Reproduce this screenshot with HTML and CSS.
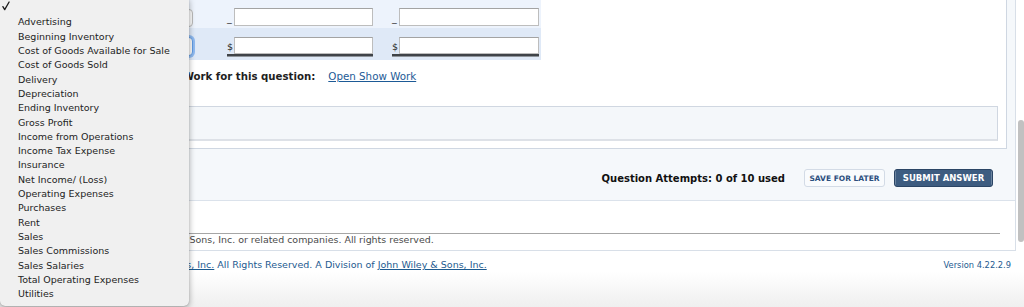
FILE: index.html
```html
<!DOCTYPE html>
<html lang="en">
<head>
<meta charset="UTF-8">
<title>Question Assistance</title>
<link rel="stylesheet" href="styles.css">
</head>
<body>
  <div class="page">
    <div class="question">
      <div class="sheet">
        <div class="row first">
          <div class="label"></div>
          <div class="pickcell"><div class="pick"></div></div>
          <div class="val wide"><span class="mark">_</span><input type="text" class="num"></div>
          <div class="val"><span class="mark">_</span><input type="text" class="num wider"></div>
        </div>
        <div class="row second">
          <div class="label"></div>
          <div class="pickcell"><div class="pick focused"></div></div>
          <div class="val wide"><span class="total"><span class="mark">$</span><input type="text" class="num"></span></div>
          <div class="val"><span class="total"><span class="mark">$</span><input type="text" class="num wider"></span></div>
        </div>
      </div>

      <div class="showwork">
        <b>Click if you would like to Show Work for this question:</b>
        <a href="#" class="worklink">Open Show Work</a>
      </div>

      <div class="workbox"></div>
    </div>

    <div class="attempts">
      <b>Question Attempts: 0 of 10 used</b>
      <button class="btn save">SAVE FOR LATER</button>
      <button class="btn submit">SUBMIT ANSWER</button>
    </div>

    <div class="legal">
      <p class="copy">© 2000-2019 John Wiley &amp; Sons, Inc. or related companies. All rights reserved.</p>
    </div>
  </div>

  <div class="footer">
    <span>© 2000-2019 <a href="#">John Wiley &amp; Sons, Inc.</a> All Rights Reserved. A Division of <a href="#">John Wiley &amp; Sons, Inc.</a></span>
    <span class="version">Version 4.22.2.9</span>
  </div>

  <!-- open dropdown of the account picker -->
  <ul class="menu">
    <li class="checked"><svg width="8" height="10" viewBox="0 0 8 10"><path d="M0.9 5.6 L2.7 8.6 L7.1 1" fill="none" stroke="#1a1a1a" stroke-width="1.3" stroke-linecap="round" stroke-linejoin="round"/></svg></li>
    <li>Advertising</li>
    <li>Beginning Inventory</li>
    <li>Cost of Goods Available for Sale</li>
    <li>Cost of Goods Sold</li>
    <li>Delivery</li>
    <li>Depreciation</li>
    <li>Ending Inventory</li>
    <li>Gross Profit</li>
    <li>Income from Operations</li>
    <li>Income Tax Expense</li>
    <li>Insurance</li>
    <li>Net Income/ (Loss)</li>
    <li>Operating Expenses</li>
    <li>Purchases</li>
    <li>Rent</li>
    <li>Sales</li>
    <li>Sales Commissions</li>
    <li>Sales Salaries</li>
    <li>Total Operating Expenses</li>
    <li>Utilities</li>
  </ul>

  <div class="scrollthumb"></div>
</body>
</html>
```

FILE: styles.css
```css
html, body {
    margin: 0;
    height: 100%;
}

body {
    font-family: "DejaVu Sans", Verdana, sans-serif;
    font-size: 9.5px;
    color: #222;
    background: linear-gradient(to bottom, #ffffff 0, #ffffff 272px, #efefef 307px);
    position: relative;
    overflow: hidden;
}

.page {
    width: 1015px;
    background: #f5f8fb;
    border-right: 1px solid #d8dfe8;
    border-bottom: 1px solid #d8dfe8;
}

.question {
    width: 1007px;
    height: 149px;
    box-sizing: border-box;
    background: #fff;
    border-right: 1px solid #cfd7e2;
    border-bottom: 1px solid #cfd7e2;
    overflow: hidden;
}

/* answer sheet */
.sheet {
    margin-left: 10px;
    width: 531px;
}

.row {
    display: grid;
    grid-template-columns: 90px 122px 163px 156px;
    align-items: start;
}

.row.first {
    height: 28px;
    background: #edf3fc;
}

.row.second {
    height: 32px;
    background: #dfe9f7;
}

.pickcell {
    padding-left: 8px;
}

.pick {
    width: 85px;
    height: 18px;
    margin-top: 9px;
    box-sizing: border-box;
    background: #fafafa;
    border: 1px solid #b9b9b9;
    border-radius: 4px;
}

.second .pick {
    height: 19px;
}

.pick.focused {
    border-color: #5f9be3;
    box-shadow: 0 0 0 2px #8fbaf0;
}

.val {
    display: flex;
    align-items: flex-end;
    padding-left: 7px;
    padding-top: 8px;
}

.val.wide {
    padding-left: 5px;
}

.second .val {
    padding-top: 9px;
}

.mark {
    display: inline-block;
    width: 7px;
    line-height: 15px;
    color: #222;
}

.num {
    width: 139px;
    height: 18px;
    box-sizing: border-box;
    margin: 0;
    padding: 0;
    background: #fff;
    border: 1px solid #bdbdbd;
    border-top-color: #a3a3a3;
}

.num.wider {
    width: 140px;
}

.second .num {
    height: 17px;
}

.total {
    display: flex;
    align-items: flex-end;
    border-bottom: 2px solid #3f4348;
    box-shadow: 0 1px 0 #8e949b;
}

/* show work line */
.showwork {
    margin-top: 10px;
    padding-left: 4px;
    line-height: 12px;
    white-space: nowrap;
}

.showwork b {
    font-size: 10.2px;
    color: #1e1e1e;
}

.worklink {
    margin-left: 10px;
    font-size: 10.3px;
    color: #1d5a96;
}

.workbox {
    margin: 23px 8px 0 10px;
    height: 35px;
    box-sizing: border-box;
    background: #f4f7fa;
    border: 1px solid #d0d7e1;
    border-bottom: 2px solid #dde1e7;
}

/* attempts + buttons */
.attempts {
    height: 52px;
    box-sizing: border-box;
    padding: 7px 22px 0 0;
    display: flex;
    justify-content: flex-end;
    align-items: center;
    border-bottom: 1px solid #dbe2eb;
}

.attempts b {
    font-size: 10px;
    color: #111;
    margin-right: 19px;
}

.btn {
    font-family: "DejaVu Sans", Verdana, sans-serif;
    font-weight: bold;
    height: 18px;
    padding: 0;
    border-radius: 3px;
    cursor: pointer;
}

.btn.save {
    width: 81px;
    font-size: 7.5px;
    color: #2c4f7e;
    background: #f9fbfd;
    border: 1px solid #d3dbe6;
    margin-right: 9px;
}

.btn.submit {
    width: 99px;
    font-size: 8.5px;
    color: #fff;
    background: #3d5c80;
    border: 1px solid #2b4565;
    box-shadow: inset 7px 0 0 -6px rgba(255,255,255,0.25), inset -7px 0 0 -6px rgba(255,255,255,0.25);
}

/* legal strip */
.legal {
    height: 49px;
    box-sizing: border-box;
    background: #fff;
    padding: 32px 15px 0 10px;
}

.copy {
    margin: 0;
    border-top: 1px solid #a6a6a6;
    padding-left: 50px;
    line-height: 12px;
    font-size: 9.45px;
    color: #4a4a4a;
    white-space: nowrap;
}

.footer {
    display: flex;
    justify-content: space-between;
    padding: 8px 13px 0 38px;
    line-height: 12px;
    color: #1d5a8f;
    white-space: nowrap;
}

.footer a {
    color: #1d5a8f;
}

.version {
    font-size: 8.3px;
}

/* open dropdown */
.menu {
    position: absolute;
    left: 0;
    top: -2px;
    width: 189px;
    margin: 0;
    padding: 0 0 4px 0;
    list-style: none;
    background: #f0f0f0;
    border-radius: 0 0 5px 5px;
    box-shadow: 0 2px 6px rgba(0,0,0,0.35), 0 0 1px rgba(0,0,0,0.3);
}

.menu li {
    padding-left: 18px;
    line-height: 14.32px;
    height: 14.32px;
    color: #232323;
    white-space: nowrap;
}

.menu li.checked {
    padding-left: 2px;
    line-height: 0;
}

.menu li.checked svg {
    display: block;
    margin-top: 3px;
}

.scrollthumb {
    position: absolute;
    left: 1018px;
    top: 120px;
    width: 6px;
    height: 122px;
    background: #c1c1c1;
    border-radius: 3px;
}
```
